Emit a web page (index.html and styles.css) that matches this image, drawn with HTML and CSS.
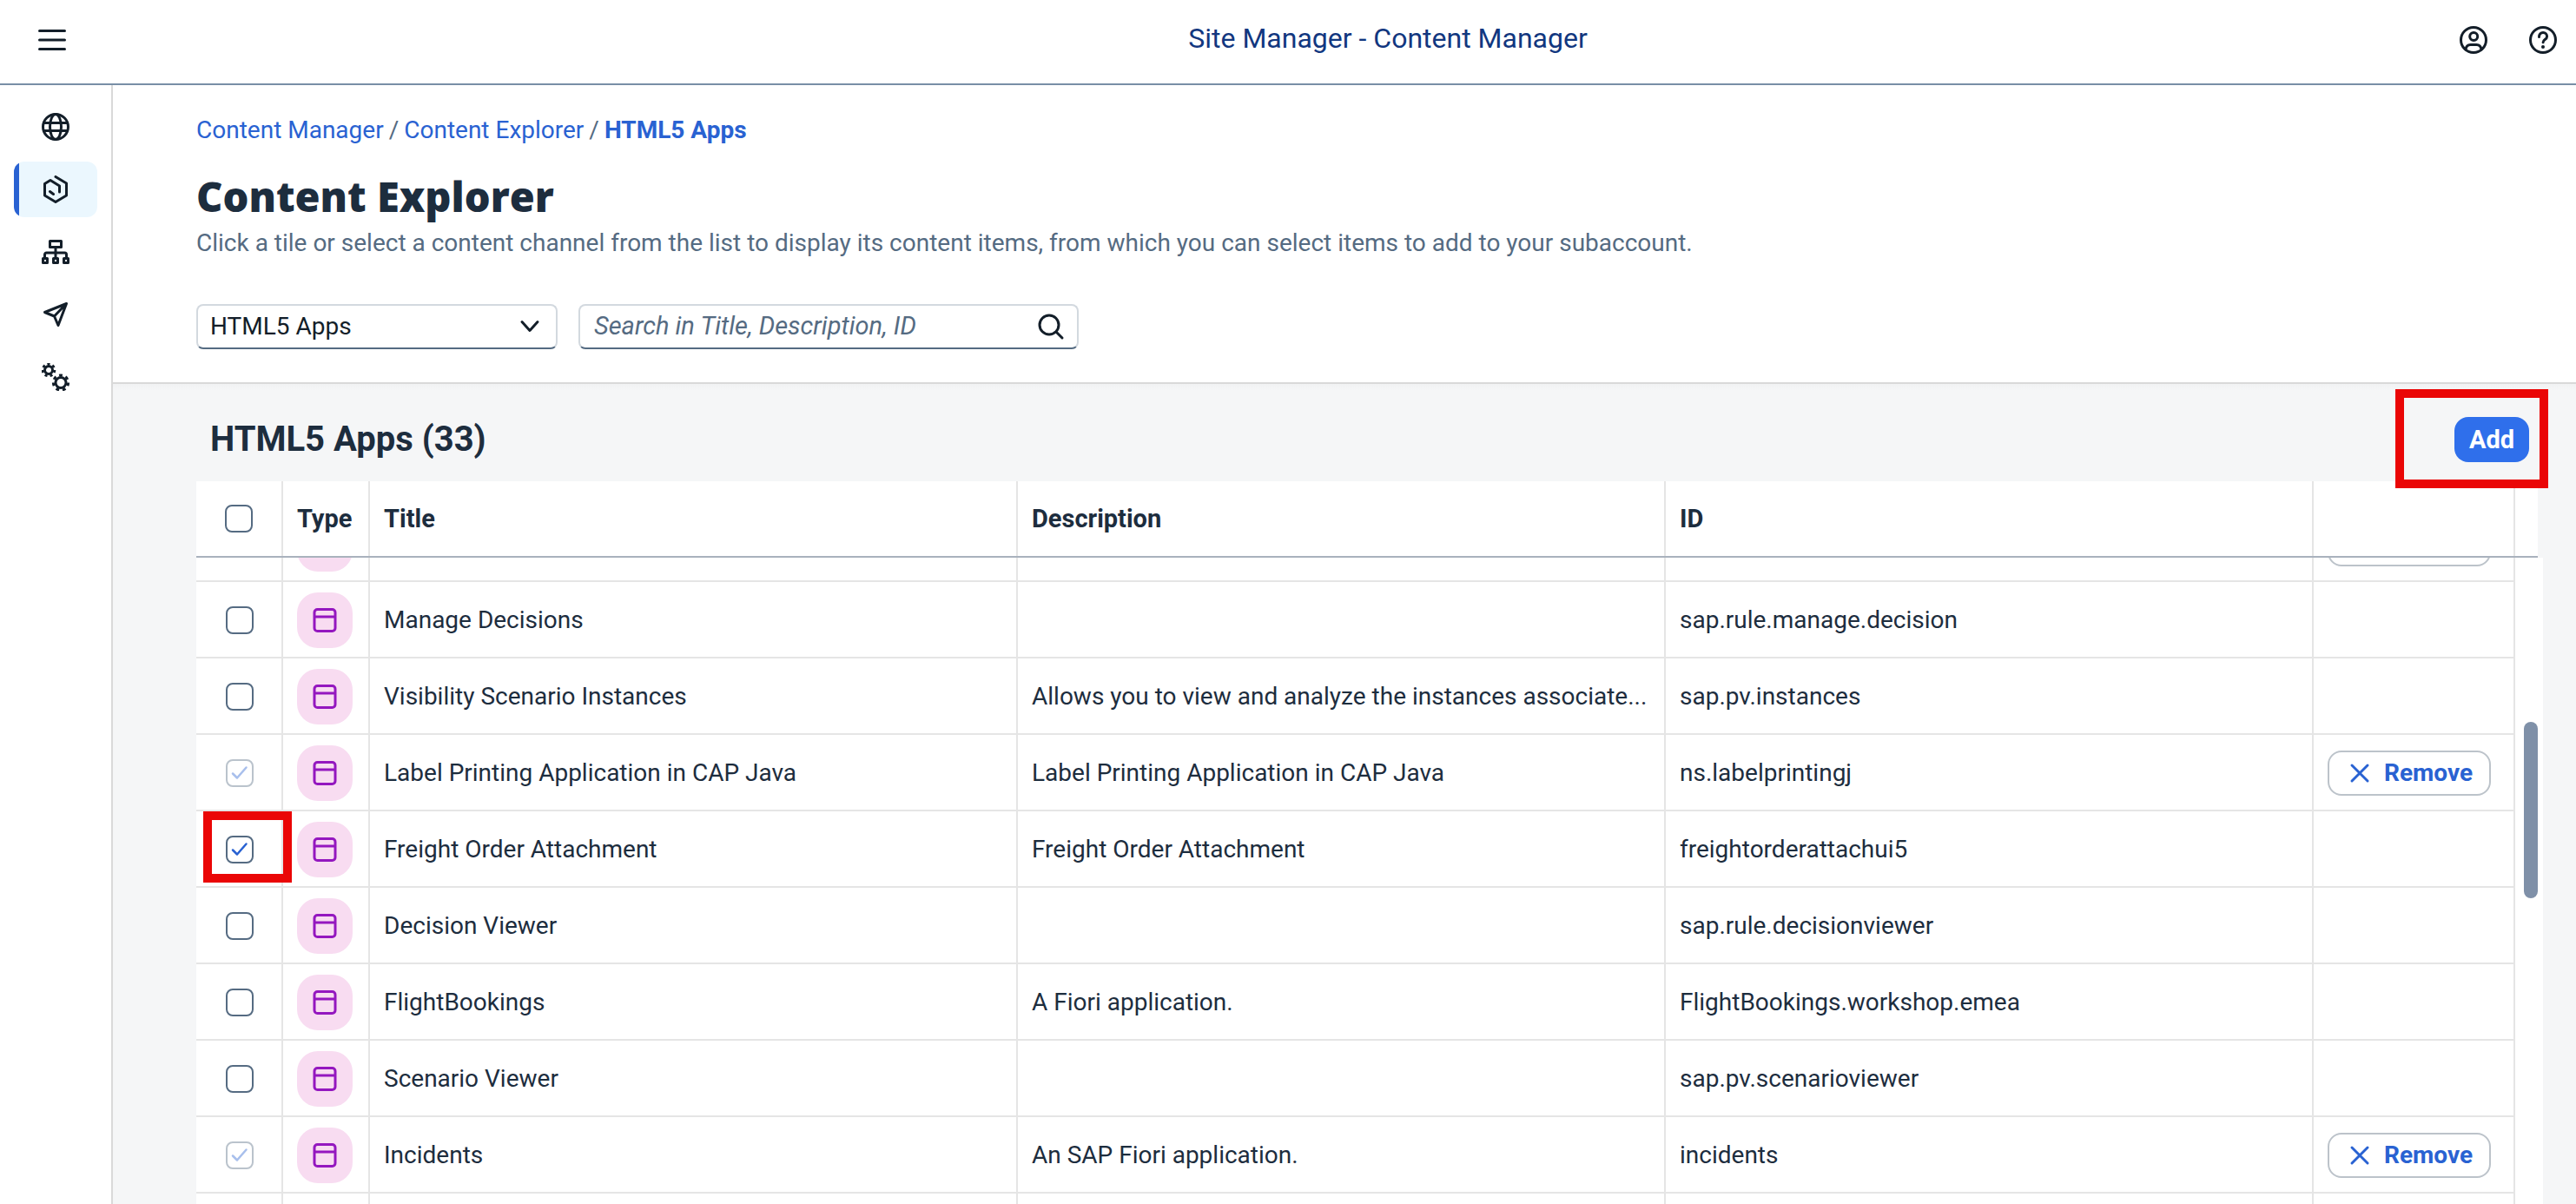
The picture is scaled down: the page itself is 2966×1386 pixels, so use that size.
FILE: index.html
```html
<!DOCTYPE html>
<html lang="en">
<head>
<meta charset="utf-8">
<title>Site Manager - Content Manager</title>
<link rel="stylesheet" href="styles.css">
</head>
<body>
<svg class="sprite" aria-hidden="true">
  <symbol id="icon-app" viewBox="0 0 32 32"><path d="M6 2.500h17a3.500 3.500 0 0 1 3.500 3.500v18a3.500 3.500 0 0 1-3.500 3.500H6a3.500 3.500 0 0 1-3.500-3.500V6A3.500 3.500 0 0 1 6 2.500zM2.500 11h24" transform="translate(1.500 1)"/></symbol>
  <symbol id="icon-x" viewBox="0 0 24 24"><path d="M3 3l18 18M21 3L3 21"/></symbol>
</svg>
<div class="app">
  <header class="shell">
    <div class="shell-start">
      <button class="icon-button" aria-label="Menu"><svg class="icon" viewBox="0 0 32 32"><path d="M1.500 5.500h29M1.500 16h29M1.500 26.500h29"/></svg></button>
    </div>
    <div class="shell-title">Site Manager - Content Manager</div>
    <div class="shell-end">
      <button class="icon-button" aria-label="Profile"><svg class="icon" viewBox="0 0 32 32"><circle cx="16" cy="16" r="14.500"/><circle cx="16.200" cy="12" r="4.500"/><path d="M7 27c.5-3.500 2.500-5.500 5.500-5.500h7c3 0 5 2 5.500 5.500"/></svg></button>
      <button class="icon-button" aria-label="Help"><svg class="icon" viewBox="0 0 32 32"><circle cx="16" cy="16" r="14.500"/><path d="M11.500 12.500c0-3 2-5 4.600-5s4.500 1.900 4.500 4.400c0 3.600-4.500 3.600-4.500 6.800"/><circle class="dot" cx="16" cy="24" r="2"/></svg></button>
    </div>
  </header>
  <div class="body">
    <nav class="side" aria-label="Main">
      <a class="side-item" href="#" aria-label="Site Directory"><svg class="icon" viewBox="0 0 32 32"><circle cx="16" cy="16" r="14.500"/><ellipse cx="16" cy="16" rx="6.500" ry="14.500"/><path d="M2.500 11.500h27M2.500 20.500h27"/></svg></a>
      <a class="side-item side-item-active" href="#" aria-label="Content Manager" aria-current="page"><svg class="icon" viewBox="0 0 32 32"><path d="M16 1.500L28.500 9v14L16 30.500 3.500 23V9.500L10 5.500l10.500 6.500v7M9.500 18.500l4 3"/></svg></a>
      <a class="side-item" href="#" aria-label="Channel Manager"><svg class="icon" viewBox="0 0 32 32"><path d="M9.500 3.500h13v7h-13zM16 10.500V22M3.500 22v-3a2 2 0 0 1 2-2h21a2 2 0 0 1 2 2v3M1.500 23.500h5v5h-5zM13.500 23.500h5v5h-5zM25.500 23.500h5v5h-5z"/></svg></a>
      <a class="side-item" href="#" aria-label="Transport"><svg class="icon" viewBox="0 0 32 32"><path d="M28.500 3.500L3.500 13.500l11 4.500 4.500 10.500zM28.500 3.500L14.500 18"/></svg></a>
      <a class="side-item" href="#" aria-label="Settings"><svg class="icon" viewBox="0 0 32 32"><circle cx="8" cy="8" r="4.500"/><circle class="teeth" cx="8" cy="8" r="6.800" pathLength="14" transform="rotate(-103 8 8)"/><circle cx="22" cy="22.500" r="6"/><circle class="teeth" cx="22" cy="22.500" r="8.600" pathLength="14" transform="rotate(-103 22 22.500)"/></svg></a>
    </nav>
    <main class="main">
      <section class="page-head">
        <nav class="crumbs" aria-label="Breadcrumb"><a href="#">Content Manager</a><span>/</span><a href="#">Content Explorer</a><span>/</span><a class="current" href="#" aria-current="page">HTML5 Apps</a></nav>
        <h1>Content Explorer</h1>
        <p class="lead">Click a tile or select a content channel from the list to display its content items, from which you can select items to add to your subaccount.</p>
        <div class="filters">
          <div class="field field-select">
            <select aria-label="Content channel"><option>HTML5 Apps</option></select>
            <svg class="chevron" viewBox="0 0 24 24" aria-hidden="true"><path d="M3 6.500l9 10 9-10"/></svg>
          </div>
          <div class="field field-search">
            <input type="text" aria-label="Search" placeholder="Search in Title, Description, ID">
            <button class="search-button" aria-label="Search"><svg class="icon" viewBox="0 0 32 32"><circle cx="14" cy="14" r="11"/><path d="M22 22l7 7"/></svg></button>
          </div>
        </div>
      </section>
      <section class="content">
        <div class="toolbar">
          <h2>HTML5 Apps (33)</h2>
          <div class="add-wrap"><button class="add">Add</button><span class="mark mark-add"></span></div>
        </div>
        <div class="head-area">
          <table class="grid">
            <colgroup><col class="c-check"><col class="c-type"><col><col><col><col class="c-action"></colgroup>
            <thead><tr><th class="center"><input type="checkbox" aria-label="Select all"></th><th>Type</th><th>Title</th><th>Description</th><th>ID</th><th aria-label="Actions"></th></tr></thead>
          </table>
        </div>
        <div class="rows-area">
          <table class="grid rows" aria-label="HTML5 Apps">
            <colgroup><col class="c-check"><col class="c-type"><col><col><col><col class="c-action"></colgroup>
            <tbody>
              <tr><td class="center"></td><td><span class="badge"><svg><use href="#icon-app"/></svg></span></td><td></td><td></td><td></td><td><button class="remove" aria-label="Remove"></button></td></tr>
              <tr><td class="center"><input type="checkbox" aria-label="Select Manage Decisions"></td><td><span class="badge"><svg><use href="#icon-app"/></svg></span></td><td>Manage Decisions</td><td></td><td>sap.rule.manage.decision</td><td></td></tr>
              <tr><td class="center"><input type="checkbox" aria-label="Select Visibility Scenario Instances"></td><td><span class="badge"><svg><use href="#icon-app"/></svg></span></td><td>Visibility Scenario Instances</td><td>Allows you to view and analyze the instances associate...</td><td>sap.pv.instances</td><td></td></tr>
              <tr><td class="center"><input type="checkbox" checked disabled aria-label="Select Label Printing Application in CAP Java"></td><td><span class="badge"><svg><use href="#icon-app"/></svg></span></td><td>Label Printing Application in CAP Java</td><td>Label Printing Application in CAP Java</td><td>ns.labelprintingj</td><td><button class="remove"><svg><use href="#icon-x"/></svg>Remove</button></td></tr>
              <tr><td class="center"><input type="checkbox" checked aria-label="Select Freight Order Attachment"><span class="mark mark-row"></span></td><td><span class="badge"><svg><use href="#icon-app"/></svg></span></td><td>Freight Order Attachment</td><td>Freight Order Attachment</td><td>freightorderattachui5</td><td></td></tr>
              <tr><td class="center"><input type="checkbox" aria-label="Select Decision Viewer"></td><td><span class="badge"><svg><use href="#icon-app"/></svg></span></td><td>Decision Viewer</td><td></td><td>sap.rule.decisionviewer</td><td></td></tr>
              <tr><td class="center"><input type="checkbox" aria-label="Select FlightBookings"></td><td><span class="badge"><svg><use href="#icon-app"/></svg></span></td><td>FlightBookings</td><td>A Fiori application.</td><td>FlightBookings.workshop.emea</td><td></td></tr>
              <tr><td class="center"><input type="checkbox" aria-label="Select Scenario Viewer"></td><td><span class="badge"><svg><use href="#icon-app"/></svg></span></td><td>Scenario Viewer</td><td></td><td>sap.pv.scenarioviewer</td><td></td></tr>
              <tr><td class="center"><input type="checkbox" checked disabled aria-label="Select Incidents"></td><td><span class="badge"><svg><use href="#icon-app"/></svg></span></td><td>Incidents</td><td>An SAP Fiori application.</td><td>incidents</td><td><button class="remove"><svg><use href="#icon-x"/></svg>Remove</button></td></tr>
              <tr><td class="center"></td><td></td><td></td><td></td><td></td><td></td></tr>
            </tbody>
          </table>
          <div class="scroll-track"><div class="scroll-thumb"></div></div>
        </div>
      </section>
    </main>
  </div>
</div>
</body>
</html>
```
FILE: styles.css
```css
* { box-sizing: border-box; }

body {
  margin: 0;
  font-family: Roboto, "Liberation Sans", sans-serif;
  font-size: 28px;
  line-height: 36px;
  color: #1d2d3e;
}

button, input, select { font: inherit; color: inherit; margin: 0; }
button { padding: 0; border: 0; background: none; cursor: pointer; }

.sprite { display: none; }

.icon {
  display: block;
  width: 32px;
  height: 32px;
  fill: none;
  stroke: #131e29;
  stroke-width: 3;
  stroke-linecap: round;
  stroke-linejoin: round;
}
.icon .dot { fill: #131e29; stroke: none; }
.icon .teeth { stroke-linecap: butt; stroke-dasharray: 1 1; }

.app {
  display: flex;
  flex-direction: column;
  height: 100vh;
  overflow: hidden;
  background: #fff;
}

/* Shell bar */
.shell {
  display: flex;
  align-items: center;
  flex: none;
  height: 98px;
  padding-bottom: 4px;
  border-bottom: 2px solid #788fa6;
}
.shell-start { flex: none; width: 380px; padding-left: 28px; }
.shell-title {
  flex: 1;
  padding-bottom: 4px;
  text-align: center;
  font-size: 32px;
  color: #12377f;
}
.shell-end { display: flex; gap: 16px; padding-right: 6px; flex: none; }
.icon-button {
  display: grid;
  place-items: center;
  width: 64px;
  height: 64px;
}

/* Side navigation */
.body { display: flex; flex: 1; min-height: 0; }
.side {
  display: flex;
  flex-direction: column;
  gap: 8px;
  flex: none;
  width: 130px;
  padding: 16px;
  border-right: 2px solid #d9d9d9;
}
.side-item {
  display: grid;
  place-items: center;
  width: 96px;
  height: 64px;
  border-radius: 12px;
}
.side-item-active {
  background: linear-gradient(to right, #2962d2 6px, #ebf7fe 6px);
}

.main { display: flex; flex-direction: column; flex: 1; min-width: 0; }

/* Page header */
.page-head {
  flex: none;
  padding: 34px 96px 38px;
  border-bottom: 2px solid #d9d9d9;
}
.crumbs { display: flex; gap: 6px; color: #556b82; }
.crumbs a { color: #2962d2; text-decoration: none; }
.crumbs .current { font-weight: 700; }
h1 {
  margin: 28px 0 6px;
  font-family: "Open Sans", "Noto Sans", sans-serif;
  font-size: 47px;
  font-weight: 800;
  line-height: 60px;
}
.lead { margin: 0 0 52px; color: #556b82; }
.filters { display: flex; gap: 24px; }
.field {
  height: 52px;
  border: 2px solid #d3d9df;
  border-bottom-color: #556b82;
  border-radius: 8px;
}
.field-select { display: grid; width: 416px; color: #131e29; }
.field-select > * { grid-area: 1 / 1; }
.field select {
  appearance: none;
  border: 0;
  background: none;
  padding: 0 14px;
  width: 100%;
}
.chevron {
  justify-self: end;
  align-self: center;
  width: 24px;
  height: 24px;
  margin-right: 18px;
  fill: none;
  stroke: #131e29;
  stroke-width: 3;
  stroke-linecap: round;
  stroke-linejoin: round;
  pointer-events: none;
}
.field-search { display: flex; align-items: center; width: 576px; }
.field input {
  flex: 1;
  min-width: 0;
  border: 0;
  padding: 0 16px;
  background: none;
  outline: 0;
}
.field input::placeholder { color: #556b82; font-style: italic; font-size: 29px; opacity: 1; }
.search-button { margin-right: 14px; }

/* List area */
.content {
  display: flex;
  flex-direction: column;
  flex: 1;
  min-height: 0;
  padding: 0 38px 0 96px;
  background: linear-gradient(#f1f2f3, #f5f6f7 8px);
}
.toolbar {
  display: flex;
  align-items: center;
  justify-content: space-between;
  flex: none;
  height: 112px;
  padding: 16px 16px 0;
}
h2 { margin: 0; font-size: 40px; line-height: 52px; }
.add-wrap { position: relative; }
.add {
  display: block;
  width: 86px;
  height: 52px;
  border-radius: 16px;
  background: #2f6feb;
  color: #fff;
  font-weight: 700;
  font-size: 29px;
}
.mark {
  position: absolute;
  z-index: 1;
  border: 10px solid #ea0606;
  pointer-events: none;
}
.mark-add { left: -68px; top: -32px; width: 176px; height: 114px; }
.mark-row { left: 8px; top: 0; width: 102px; height: 82px; }

.head-area {
  flex: none;
  margin-right: 6px;
  padding-right: 26px;
  background: #fff;
  border-bottom: 2px solid #a9b2bd;
}
.rows-area {
  display: flex;
  flex: 1;
  min-height: 0;
  overflow: hidden;
  background: #fff;
}
.grid {
  width: 100%;
  table-layout: fixed;
  border-collapse: separate;
  border-spacing: 0;
}
.c-check, .c-type { width: 100px; }
.c-action { width: 232px; }
.grid th, .grid td {
  padding: 0 0 0 16px;
  border-right: 2px solid #e5e5e5;
  text-align: left;
  vertical-align: middle;
  white-space: nowrap;
}
.grid th { height: 86px; font-size: 29px; font-weight: 700; }
.grid td {
  position: relative;
  height: 88px;
  padding-top: 2px;
  border-bottom: 2px solid #e5e5e5;
}
.grid th.center { padding-left: 0; }
.grid td.center { padding-left: 2px; }

/* The list is scrolled part of the way into its first visible row */
.rows { flex: 1; align-self: flex-start; margin-top: -60px; }

input[type="checkbox"] {
  appearance: none;
  display: block;
  width: 32px;
  height: 32px;
  margin: 0 auto;
  border: 2px solid #556b82;
  border-radius: 8px;
  background: #fff center / 28px 28px no-repeat;
}
input[type="checkbox"]:checked {
  background-image: url("data:image/svg+xml,%3Csvg xmlns='http://www.w3.org/2000/svg' viewBox='0 0 28 28'%3E%3Cpath d='M6 14.500l5 5L21.500 7.500' fill='none' stroke='%232962d2' stroke-width='2.500' stroke-linecap='round' stroke-linejoin='round'/%3E%3C/svg%3E");
}
input[type="checkbox"]:disabled { opacity: .4; }

.badge {
  display: grid;
  place-items: center;
  width: 64px;
  height: 64px;
  border-radius: 24px;
  background: #f8dcf1;
}
.badge svg {
  width: 32px;
  height: 32px;
  fill: none;
  stroke: #9417bf;
  stroke-width: 3;
}

.remove {
  display: flex;
  align-items: center;
  gap: 16px;
  width: 188px;
  height: 52px;
  padding-left: 23px;
  border: 2px solid #bcc3ca;
  border-radius: 16px;
  background: #fff;
  color: #2962d2;
  font-weight: 700;
}
.remove svg {
  width: 24px;
  height: 24px;
  fill: none;
  stroke: #2962d2;
  stroke-width: 3;
  stroke-linecap: round;
}

.scroll-track { flex: none; width: 32px; padding: 189px 6px 0 10px; }
.scroll-thumb { height: 203px; border-radius: 8px; background: #7f90a8; }
```
